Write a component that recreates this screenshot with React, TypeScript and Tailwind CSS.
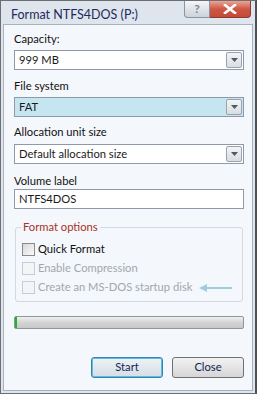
import React from "react";

const font = { fontFamily: 'Lato, "Noto Sans", sans-serif' };

function Arrow() {
  return (
    <div className="w-[16px] h-[16px] mr-[1px] border border-[#9aa3ad] rounded-[2px] bg-gradient-to-b from-[#f4f4f4] to-[#d9dde2] flex items-center justify-center">
      <svg width="7" height="4" viewBox="0 0 7 4">
        <path d="M0 0h7L3.5 4z" fill="#4d5a6b" />
      </svg>
    </div>
  );
}

function Select({ value, active }: { value: string; active?: boolean }) {
  return (
    <div
      className={`h-[20px] border border-[#8e9aa7] flex items-center justify-between pl-[4px] ${
        active ? "bg-[#c5e6f1]" : "bg-white"
      }`}
    >
      <span className="text-[#1a1a1a]">{value}</span>
      <Arrow />
    </div>
  );
}

function Check({ label, disabled }: { label: string; disabled?: boolean }) {
  return (
    <div className="flex items-center gap-[3px] h-[19px] whitespace-nowrap">
      <div
        className={`w-[13px] h-[13px] border ${
          disabled ? "border-[#c9cdd2] bg-[#f3f5f7]" : "border-[#8a8a8a] bg-gradient-to-br from-[#d8d8d8] to-[#fafafa]"
        }`}
      />
      <span className={disabled ? "text-[#a3a8ad]" : "text-[#111]"}>{label}</span>
    </div>
  );
}

export default function App() {
  return (
    <div
      className="w-[257px] h-[394px] bg-[#dfe5ec] border border-[#6b6f74] border-r-2 border-r-[#4d5157] flex flex-col text-[11.2px]"
      style={font}
    >
      <div className="h-[23px] flex items-start justify-between pl-[10px] pr-[4px]">
        <span className="text-[12.5px] text-[#1d2a5c] mt-[5px]">Format NTFS4DOS (P:)</span>
        <div className="flex">
          <div className="w-[26px] h-[17px] border border-[#8e949c] border-t-0 rounded-bl-[4px] bg-gradient-to-b from-[#f4f6f8] to-[#cdd3da] flex items-center justify-center text-[12px] font-bold text-[#7b8490] leading-none">
            ?
          </div>
          <div className="w-[41px] h-[17px] border border-[#8c3a32] border-t-0 border-l-0 rounded-br-[4px] bg-gradient-to-b from-[#e9a496] via-[#cd5744] to-[#c44a38] flex items-center justify-center">
            <svg width="14" height="10" viewBox="0 0 14 10">
              <path d="M2 1l10 8M12 1L2 9" stroke="#fff" strokeWidth="2.6" strokeLinecap="square" />
            </svg>
          </div>
        </div>
      </div>
      <div className="flex-1 mx-[2px] mb-[2px] border border-[#a9b2bc] bg-[#f4f7fb] pl-[10px] pr-[8px] pt-[6px] flex flex-col">
        <div className="text-[#111] h-[16px] leading-[16px]">Capacity:</div>
        <div className="mt-[3px]">
          <Select value="999 MB" />
        </div>
        <div className="mt-[8px] text-[#111] h-[16px] leading-[16px]">File system</div>
        <div className="mt-[3px]">
          <Select value="FAT" active />
        </div>
        <div className="mt-[7px] text-[#111] h-[16px] leading-[16px]">Allocation unit size</div>
        <div className="mt-[4px]">
          <Select value="Default allocation size" />
        </div>
        <div className="mt-[9px] text-[#111] h-[16px] leading-[16px]">Volume label</div>
        <div className="h-[20px] border border-[#8e9aa7] bg-white pl-[4px] flex items-center text-[#1a1a1a]">
          NTFS4DOS
        </div>
        <div className="relative mt-[18px] mx-[1px] border border-[#d3d9df] rounded-[3px] h-[75px] pt-[12px] pl-[6px]">
          <span className="absolute -top-[9px] left-[5px] px-[2px] bg-[#f4f7fb] text-[#a5342a]">Format options</span>
          <Check label="Quick Format" />
          <Check label="Enable Compression" disabled />
          <div className="flex items-center">
            <Check label="Create an MS-DOS startup disk" disabled />
            <svg width="34" height="8" viewBox="0 0 34 8" className="ml-[7px]">
              <path d="M33 4H6" stroke="#9fcfdf" strokeWidth="2" />
              <path d="M0 4l8-4v8z" fill="#9fcfdf" />
            </svg>
          </div>
        </div>
        <div className="mt-[14px] h-[13px] border border-[#8f959b] rounded-[2px] bg-gradient-to-b from-[#f0f0f0] via-[#d4d4d4] to-[#c8c8c8] flex">
          <div className="w-[2px] h-full bg-[#1fb42a]" />
        </div>
        <div className="flex-1" />
        <div className="flex justify-end gap-[9px] mb-[12px]">
          <div className="w-[72px] h-[21px] border border-[#3c7fb1] rounded-[3px] bg-gradient-to-b from-[#eef2f6] to-[#d5dde6] shadow-[inset_0_0_0_1px_#56c0e0] flex items-center justify-center text-[#111e55]">
            Start
          </div>
          <div className="w-[72px] h-[21px] border border-[#707070] rounded-[3px] bg-gradient-to-b from-[#f2f2f2] to-[#d6d6d6] flex items-center justify-center text-[#111e55]">
            Close
          </div>
        </div>
      </div>
    </div>
  );
}
